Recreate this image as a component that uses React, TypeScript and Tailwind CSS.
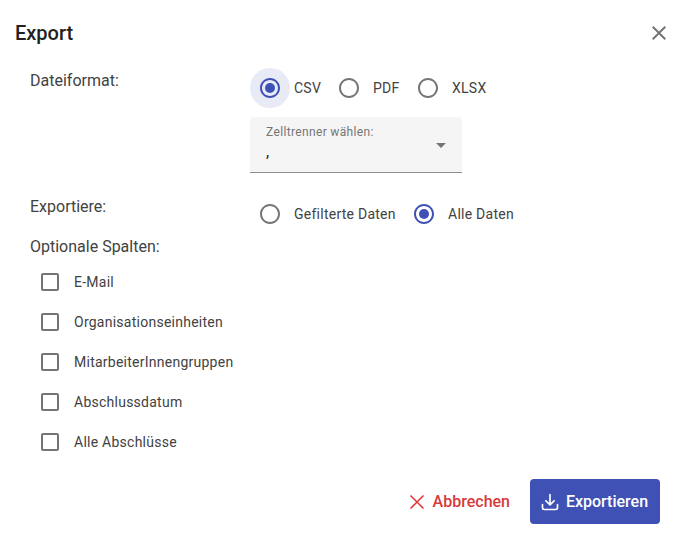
import React from "react";

function Radio({ checked, halo }: { checked?: boolean; halo?: boolean }) {
  return (
    <span className={`flex h-10 w-10 shrink-0 items-center justify-center rounded-full ${halo ? "bg-[#e8eaf6]" : ""}`}>
      <svg width="24" height="24" viewBox="0 0 24 24" fill={checked ? "#3f51b5" : "#757575"}>
        <path d="M12 2C6.48 2 2 6.48 2 12s4.48 10 10 10 10-4.48 10-10S17.52 2 12 2zm0 18c-4.42 0-8-3.58-8-8s3.58-8 8-8 8 3.58 8 8-3.58 8-8 8z" />
        {checked && <circle cx="12" cy="12" r="5" />}
      </svg>
    </span>
  );
}

function Option({ label, checked, halo, width }: { label: string; checked?: boolean; halo?: boolean; width: string }) {
  return (
    <div className={`flex h-10 shrink-0 items-center ${width}`}>
      <Radio checked={checked} halo={halo} />
      <span className="ml-1 text-sm tracking-[0.25px] text-[#424242]">{label}</span>
    </div>
  );
}

function Check({ label }: { label: string }) {
  return (
    <div className="flex h-10 items-center pl-[38px]">
      <svg width="24" height="24" viewBox="0 0 24 24" fill="#757575" className="shrink-0">
        <path d="M19 5v14H5V5h14m0-2H5c-1.1 0-2 .9-2 2v14c0 1.1.9 2 2 2h14c1.1 0 2-.9 2-2V5c0-1.1-.9-2-2-2z" />
      </svg>
      <span className="ml-3 text-sm tracking-[0.25px] text-[#424242]">{label}</span>
    </div>
  );
}

export default function App() {
  return (
    <div className="h-[540px] w-[691px] overflow-hidden bg-white font-['Roboto',sans-serif]">
      <div className="flex h-[68px] items-start justify-between pl-[15px] pr-5 pt-[21px]">
        <h1 className="text-xl leading-6 font-medium text-[#212121]">Export</h1>
        <svg width="24" height="24" viewBox="0 0 24 24" fill="#757575">
          <path d="M19 6.41 17.59 5 12 10.59 6.41 5 5 6.41 10.59 12 5 17.59 6.41 19 12 13.41 17.59 19 19 17.59 13.41 12z" />
        </svg>
      </div>

      <div className="flex pl-[30px]">
        <div className="w-[220px] pt-px text-base leading-6 text-[#424242]">Dateiformat:</div>
        <div className="w-[212px]">
          <div className="flex">
            <Option label="CSV" checked halo width="w-[79px]" />
            <Option label="PDF" width="w-[79px]" />
            <Option label="XLSX" width="" />
          </div>
          <div className="relative mt-[9px] h-[56px] w-[212px] rounded-t border-b border-[#8f8f8f] bg-[#f5f5f5] px-4 pt-[8px]">
            <div className="text-xs leading-[14px] tracking-[0.35px] text-[#757575]">Zelltrenner wählen:</div>
            <div className="mt-[3px] text-base leading-5 text-[#212121]">,</div>
            <span className="absolute top-[26px] right-[16px] h-0 w-0 border-x-[5px] border-t-[5px] border-x-transparent border-t-[#757575]" />
          </div>
        </div>
      </div>

      <div className="flex pl-[30px]">
        <div className="w-[220px] pt-[22px] text-base leading-6 text-[#424242]">Exportiere:</div>
        <div className="mt-[21px] flex">
          <Option label="Gefilterte Daten" width="w-[154px]" />
          <Option label="Alle Daten" checked width="" />
        </div>
      </div>

      <div className="pl-[30px] pt-px text-base leading-6 text-[#424242]">Optionale Spalten:</div>

      <div className="mt-[3px]">
        <Check label="E-Mail" />
        <Check label="Organisationseinheiten" />
        <Check label="MitarbeiterInnengruppen" />
        <Check label="Abschlussdatum" />
        <Check label="Alle Abschlüsse" />
      </div>

      <div className="mt-[17px] flex items-center justify-end pr-[31px]">
        <button className="mr-5 flex items-center text-base font-medium text-[#d93a3a]">
          <svg width="24" height="24" viewBox="0 0 24 24" fill="none" stroke="#d93a3a" strokeWidth="1.6">
            <path d="M5.5 5.5 18.5 18.5M18.5 5.5 5.5 18.5" />
          </svg>
          <span className="ml-[4px]">Abbrechen</span>
        </button>
        <button className="flex h-[45px] w-[130px] items-center justify-center gap-[6px] rounded bg-[#3f51b5] pr-[2px] text-base font-medium text-white">
          <svg width="20" height="20" viewBox="0 0 24 24" fill="none" stroke="#fff" strokeWidth="2" strokeLinecap="round" strokeLinejoin="round">
            <path d="M12 3v12M7 10.5l5 5 5-5M3 15v4a2 2 0 0 0 2 2h14a2 2 0 0 0 2-2v-4" />
          </svg>
          Exportieren
        </button>
      </div>
    </div>
  );
}
